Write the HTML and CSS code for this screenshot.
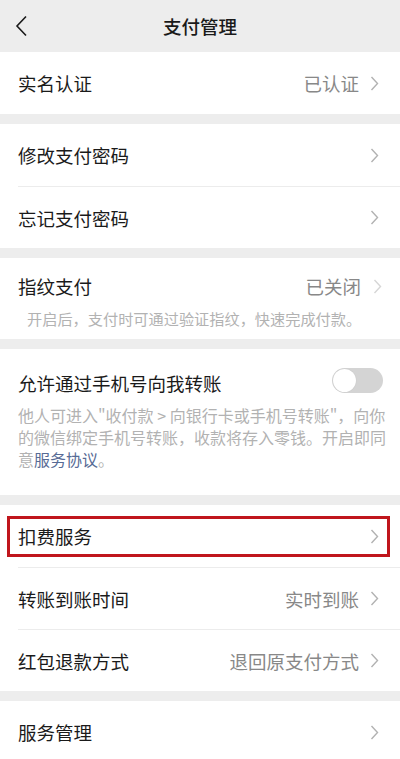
FILE: index.html
```html
<!DOCTYPE html>
<html lang="zh-CN">
<head>
    <meta charset="UTF-8">
    <meta name="viewport" content="width=device-width, initial-scale=1.0">
    <title>支付管理</title>
    <link rel="stylesheet" href="styles.css">
</head>
<body>
    <div class="navbar">
        <span class="back">
            <svg width="13" height="22" viewBox="0 0 13 22"><polyline points="11,1.5 2,11 11,20.5" fill="none" stroke="#1a1a1a" stroke-width="1.6"/></svg>
        </span>
        <h1>支付管理</h1>
    </div>

    <div class="group">
        <div class="cell">
            <span class="label">实名认证</span>
            <span class="value">已认证</span>
            <svg class="arrow" width="9" height="15" viewBox="0 0 9 15"><polyline points="1.5,1 7.5,7.5 1.5,14" fill="none" stroke="#b2b2b2" stroke-width="1.4"/></svg>
        </div>
    </div>

    <div class="group">
        <div class="cell">
            <span class="label">修改支付密码</span>
            <svg class="arrow" width="9" height="15" viewBox="0 0 9 15"><polyline points="1.5,1 7.5,7.5 1.5,14" fill="none" stroke="#b2b2b2" stroke-width="1.4"/></svg>
        </div>
        <div class="cell">
            <span class="label">忘记支付密码</span>
            <svg class="arrow" width="9" height="15" viewBox="0 0 9 15"><polyline points="1.5,1 7.5,7.5 1.5,14" fill="none" stroke="#b2b2b2" stroke-width="1.4"/></svg>
        </div>
    </div>

    <div class="group block finger">
        <div class="block-head">
            <span class="label">指纹支付</span>
            <span class="value">已关闭</span>
            <svg class="arrow" width="9" height="15" viewBox="0 0 9 15"><polyline points="1.5,1 7.5,7.5 1.5,14" fill="none" stroke="#d6d6d6" stroke-width="1.4"/></svg>
        </div>
        <p class="desc small">开启后，支付时可通过验证指纹，快速完成付款。</p>
    </div>

    <div class="group block phone">
        <div class="block-head">
            <span class="label">允许通过手机号向我转账</span>
            <span class="switch"><span class="knob"></span></span>
        </div>
        <p class="desc">他人可进入"收付款 &gt; 向银行卡或手机号转账"，向你<br>的微信绑定手机号转账，收款将存入零钱。开启即同<br>意<span class="link">服务协议</span>。</p>
    </div>

    <div class="group">
        <div class="cell">
            <span class="label">扣费服务</span>
            <svg class="arrow" width="9" height="15" viewBox="0 0 9 15"><polyline points="1.5,1 7.5,7.5 1.5,14" fill="none" stroke="#b2b2b2" stroke-width="1.4"/></svg>
            <span class="mark"></span>
        </div>
        <div class="cell">
            <span class="label">转账到账时间</span>
            <span class="value">实时到账</span>
            <svg class="arrow" width="9" height="15" viewBox="0 0 9 15"><polyline points="1.5,1 7.5,7.5 1.5,14" fill="none" stroke="#b2b2b2" stroke-width="1.4"/></svg>
        </div>
        <div class="cell">
            <span class="label">红包退款方式</span>
            <span class="value">退回原支付方式</span>
            <svg class="arrow" width="9" height="15" viewBox="0 0 9 15"><polyline points="1.5,1 7.5,7.5 1.5,14" fill="none" stroke="#b2b2b2" stroke-width="1.4"/></svg>
        </div>
    </div>

    <div class="group">
        <div class="cell">
            <span class="label">服务管理</span>
            <svg class="arrow" width="9" height="15" viewBox="0 0 9 15"><polyline points="1.5,1 7.5,7.5 1.5,14" fill="none" stroke="#b2b2b2" stroke-width="1.4"/></svg>
        </div>
    </div>
</body>
</html>
```

FILE: styles.css
```css
body {
    margin: 0;
    background: #ededed;
    font-family: "Noto Sans CJK SC", "Noto Sans", sans-serif;
    color: #1a1a1a;
    overflow: hidden;
}
.navbar {
    height: 52px;
    display: flex;
    align-items: center;
    justify-content: center;
    position: relative;
}
.navbar h1 {
    margin: 0;
    font-size: 18.5px;
    font-weight: 500;
    line-height: 24px;
}
.back {
    position: absolute;
    left: 15px;
    top: 15px;
    display: flex;
}
.group {
    background: #fff;
    margin-bottom: 10px;
}
.cell {
    height: 62px;
    margin-left: 18px;
    padding-right: 21px;
    display: flex;
    align-items: center;
    position: relative;
    box-sizing: border-box;
}
.cell + .cell {
    border-top: 1px solid #ececec;
}
.label {
    font-size: 18.5px;
    line-height: 24px;
    flex: 1;
    white-space: nowrap;
}
.value {
    font-size: 18.5px;
    line-height: 24px;
    color: #888;
    margin-right: 11px;
}
.arrow {
    display: block;
}
.block {
    padding: 0 17px 0 18px;
}
.block-head {
    display: flex;
    align-items: center;
}
.finger {
    padding-top: 16px;
    padding-bottom: 10px;
    padding-right: 18px;
}
.finger .value {
    margin-right: 12px;
}
.desc {
    margin: 9px 0 0;
    font-size: 16px;
    line-height: 22px;
    color: #b2b2b2;
    white-space: nowrap;
}
.desc.small {
    font-size: 15.2px;
    padding-left: 9px;
}
.phone {
    padding-top: 22px;
    padding-bottom: 25px;
}
.phone .block-head {
    align-items: flex-start;
}
.link {
    color: #576b95;
}
.switch {
    width: 51px;
    height: 25px;
    border-radius: 13px;
    background: #d4d4d4;
    margin-top: -3px;
    position: relative;
    display: block;
}
.knob {
    position: absolute;
    left: 1px;
    top: 1px;
    width: 23px;
    height: 23px;
    border-radius: 50%;
    background: #fff;
    box-shadow: 0 0 1px rgba(0, 0, 0, 0.15);
}
.mark {
    position: absolute;
    left: -11px;
    right: 10px;
    top: 11px;
    height: 41px;
    border: 3px solid #c0161c;
    box-sizing: border-box;
}
```
